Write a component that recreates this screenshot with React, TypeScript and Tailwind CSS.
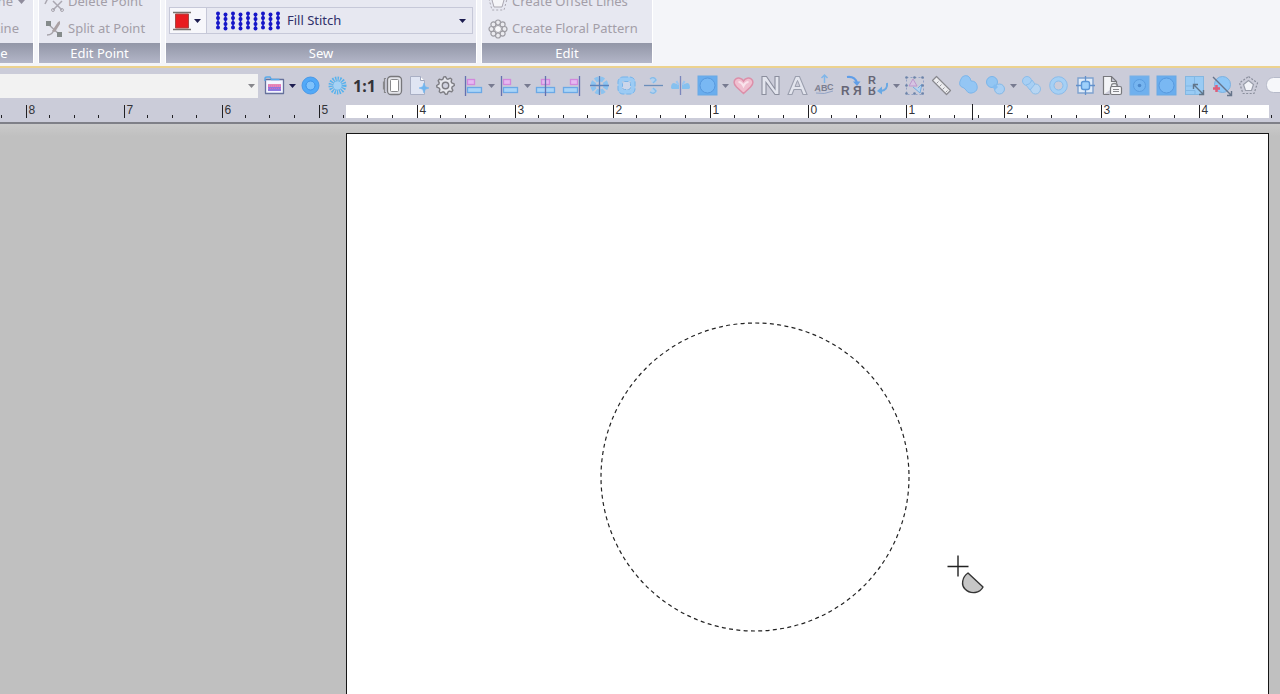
import React from "react";

type IconProps = { children: React.ReactNode; size?: number };

function Icon({ children, size = 27 }: IconProps) {
  return (
    <svg width={size} height={size} viewBox={`0 0 ${size} ${size}`} fill="none" aria-hidden="true" className="block shrink-0">
      {children}
    </svg>
  );
}

function Caret({ color = "#1c1c50" }: { color?: string }) {
  return (
    <svg width="9" height="6" viewBox="0 0 9 6" aria-hidden="true" className="block shrink-0">
      <path d="M1 1h7L4.500 5z" fill={color} />
    </svg>
  );
}

const blue = "#7db6ea";
const pale = "#9cc6f0";
const navy = "#6470b0";

const points = (n: number, r: number, cx = 13.5, cy = 13.5) =>
  Array.from({ length: n }, (_, i) => {
    const a = (i / n) * Math.PI * 2 - Math.PI / 2;
    return [cx + Math.cos(a) * r, cy + Math.sin(a) * r] as const;
  });

const gear =
  points(32, 1, 0, 0)
    .map(([x, y], i) => {
      const r = i % 4 === 1 || i % 4 === 2 ? 6.8 : 8.8;
      return `${i ? "L" : "M"}${13.5 + x * r} ${13.5 + y * r}`;
    })
    .join("") + "Z";

const icons = {
  folder: (
    <>
      <path d="M4.500 7.500h18v14h-18z" fill="#f3f5ff" stroke="#66719c" strokeWidth="1.300" strokeLinejoin="round" />
      <path d="M4 9V6.500q0-1.500 2-1.500h3l1.500 2.500h8" stroke="#58a9ea" strokeWidth="1.400" />
      <path d="M7 12h13v4H7z" fill="#e888b5" />
      <path d="M7 15h13v4H7z" fill="#8d78e0" />
      <path d="M7 14h13M7 16.500h13" stroke="#d46bc0" strokeDasharray="1 1" />
    </>
  ),
  disc: (
    <>
      <circle cx="13.500" cy="13.500" r="8.500" fill="#51a9f8" stroke="#4a98e6" />
      <circle cx="13.500" cy="13.500" r="4.500" fill="#7fc2fb" stroke="#3c92ea" />
    </>
  ),
  burst: (
    <>
      <circle cx="13.500" cy="13.500" r="6.500" stroke="#57b2ee" strokeWidth="5" strokeDasharray="1.300 1" />
      <circle cx="13.500" cy="13.500" r="4.500" stroke="#6ab9f0" strokeWidth="1" />
      <circle cx="13.500" cy="13.500" r="4" fill="#a5d2f5" />
    </>
  ),
  hoop: (
    <>
      <path d="M8 6.500H6.500V20.500H8M5.500 9.500v8" stroke="#88888c" strokeWidth="1.200" />
      <rect x="9.500" y="4.500" width="14" height="18" rx="3.500" fill="#e4e5ea" stroke="#77777b" strokeWidth="1.300" />
      <rect x="12.500" y="7.500" width="8" height="12" rx="1" fill="#fff" stroke="#88888b" />
    </>
  ),
  newPage: (
    <>
      <path d="M5.500 4.500h10l4 4v14h-14z" fill="#e0e5f3" stroke="#a9afc4" />
      <path d="M15.500 4.500v4h4" fill="#fff" stroke="#a0a7bd" />
      <path d="M19 11l1.300 3.700 3.700 1.300-3.700 1.300L19 21l-1.300-3.700-3.700-1.300 3.700-1.300z" fill="#71b5ef" stroke="#71b5ef" strokeWidth=".6" />
    </>
  ),
  gear: (
    <>
      <path d={gear} fill="#e6e7ed" stroke="#7d7d83" strokeWidth="1.400" strokeLinejoin="round" />
      <circle cx="13.500" cy="13.500" r="3.200" fill="#d0d2df" stroke="#7d7d83" strokeWidth="1.400" />
    </>
  ),
  alignLeft: (
    <>
      <rect x="7.500" y="7.500" width="7" height="5" fill="#e6b8f2" stroke="#d288dd" strokeWidth="1.300" />
      <rect x="7.500" y="15.500" width="14" height="5" fill="#a9d4f7" stroke="#6ba9e6" strokeWidth="1.300" />
      <path d="M5.500 4v20" stroke={navy} strokeWidth="1.300" />
    </>
  ),
  alignCenter: (
    <>
      <rect x="9.500" y="7.500" width="8" height="5" fill="#e6b8f2" stroke="#d288dd" strokeWidth="1.300" />
      <rect x="4.500" y="15.500" width="18" height="5" fill="#a9d4f7" stroke="#6ba9e6" strokeWidth="1.300" />
      <path d="M13.500 4v20" stroke={navy} strokeWidth="1.300" />
    </>
  ),
  alignRight: (
    <>
      <rect x="11.500" y="7.500" width="7" height="5" fill="#e6b8f2" stroke="#d288dd" strokeWidth="1.300" />
      <rect x="4.500" y="15.500" width="14" height="5" fill="#a9d4f7" stroke="#6ba9e6" strokeWidth="1.300" />
      <path d="M20.500 4v20" stroke={navy} strokeWidth="1.300" />
    </>
  ),
  centerBoth: (
    <>
      <circle cx="13.500" cy="13.500" r="6.500" stroke="#8cc3f0" strokeWidth="5" strokeDasharray="3.500 1.600" />
      <path d="M13.500 4v19M4 13.500h19" stroke="#5a83bd" strokeWidth="1.300" />
    </>
  ),
  ring: (
    <>
      <rect x="7" y="7" width="13" height="13" rx="3" stroke="#9ccbf4" strokeWidth="4.500" />
      <rect x="5" y="5" width="17" height="17" rx="5" stroke="#79b4e9" strokeWidth="1" strokeDasharray="5 2" />
      <rect x="9.500" y="9.500" width="8" height="8" rx="2" stroke="#79b4e9" fill="#ccd6ea" strokeDasharray="4 1.300" />
    </>
  ),
  centerH: (
    <>
      <path d="M10 6q4-2 7 1l-1 4h-4zM10 21q4 2 7-1l-1-4h-4z" fill="#b2d1ef" />
      <path d="M10 7q4-3 6 1l-3 3M10 20q4 3 6-1l-3-3" stroke="#86bce9" strokeWidth="1.300" />
      <path d="M4 13.500h19" stroke="#6b8ebb" strokeWidth="1.300" />
    </>
  ),
  centerV: (
    <>
      <path d="M4 16q0-5 3-5l5 2v4H5zM23 16q0-5-3-5l-5 2v4h7z" fill="#86c1ef" />
      <path d="M9.500 9l2 4M17.500 9l-2 4" stroke={pale} strokeWidth="2" />
      <path d="M13.500 4v19" stroke="#7b86bc" strokeWidth="1.300" />
    </>
  ),
  roundSquare: (
    <>
      <rect x="4" y="4" width="19" height="19" fill="#69adee" stroke="#6ba9e5" />
      <circle cx="13.500" cy="13.500" r="7.500" fill="#79b8f3" stroke="#5798dd" />
    </>
  ),
  heart: (
    <>
      <path d="M13.500 21.500L6.500 15C-.5 8 9.500 2.500 13.500 9C17.500 2.500 27.500 8 20.500 15Z" fill="#f0bfd0" stroke="#dc8fa9" strokeWidth="1.500" />
      <path d="M8.500 10q3 0 5 4q2-4 5-4" stroke="#f9e4ec" strokeWidth="2" />
    </>
  ),
  outlineN: <path d="M5 22.500v-18h4.500l8.500 12.500v-12.500h4v18h-4L9 10.500v12z" fill="#e3e5ee" stroke="#8b8e9d" strokeWidth="1.100" />,
  outlineA: (
    <>
      <path d="M4 22.500l7.500-18h4l7.500 18h-4l-2-5H10l-2 5z" fill="#e3e5ee" stroke="#9b9fae" strokeWidth="1.100" />
      <path d="M13.500 8.500l-2.500 6h5z" fill="#cbccd9" stroke="#9b9fae" />
    </>
  ),
  textCurve: (
    <>
      <path d="M13.500 3v8M10.500 6l3-3 3 3" stroke="#80b6e9" strokeWidth="1.500" />
      <text x="3" y="19" fontSize="9" fontFamily="Liberation Sans" fontWeight="700" fill="#7b7e90" transform="rotate(8 4 20)">A</text>
      <text x="10" y="19" fontSize="9" fontFamily="Liberation Sans" fontWeight="700" fill="#7b7e90">B</text>
      <text x="16" y="18" fontSize="9" fontFamily="Liberation Sans" fontWeight="700" fill="#7b7e90">C</text>
      <path d="M5 21q8 2 17-2" stroke="#93a4c6" />
    </>
  ),
  mirrorH: (
    <>
      <text x="3" y="23" fontSize="12" fontFamily="Liberation Sans" fontWeight="700" fill="#656575">R</text>
      <text x="15" y="23" fontSize="12" fontFamily="Liberation Sans" fontWeight="700" fill="#656575">Я</text>
      <path d="M9 5q8-1 10 6" stroke="#609ee8" strokeWidth="2" />
      <path d="M15 9.500h7.500L19 14z" fill="#609ee8" />
    </>
  ),
  mirrorV: (
    <>
      <text x="3" y="12" fontSize="11" fontFamily="Liberation Sans" fontWeight="700" fill="#656575">R</text>
      <g transform="translate(0 27) scale(1 -1)">
        <text x="3" y="12" fontSize="11" fontFamily="Liberation Sans" fontWeight="700" fill="#656575">R</text>
      </g>
      <path d="M22 11q1 7-6 8" stroke="#6aa9e4" strokeWidth="2" />
      <path d="M17 14.500v8L12 19z" fill="#6aa9e4" />
    </>
  ),
  selectPoints: (
    <>
      <path d="M5.500 5.500h17v17h-17z" stroke="#93a2c6" strokeDasharray="2 2" />
      <path d="M8 14l4-7 4 7z" fill="#d6c4e2" stroke="#be97cd" />
      <path d="M12 15l7 6 2-9-4 4" fill="#b5d4f0" stroke="#76acdf" />
      {[5, 13, 21].flatMap((x) =>
        [5, 13, 21].map((y) =>
          x === 13 && y === 13 ? null : <circle key={`${x}-${y}`} cx={x + 0.5} cy={y + 0.5} r="1.300" fill="#6b83a8" />
        )
      )}
    </>
  ),
  ruler: (
    <>
      <path d="M4.500 8.500l4-4L22.500 18.500l-4 4z" fill="#ededf0" stroke="#88888e" strokeWidth="1.200" strokeLinejoin="round" />
      <path d="M8.500 11.500l2-2M11.500 14.500l2-2M14.500 17.500l2-2M17.500 20.500l2-2" stroke="#99999f" />
    </>
  ),
  merge: <path d="M6 7a5 5 0 0 1 9-1l1 3a6 6 0 1 1-5 9l-2-2q-7-2-3-9z" fill="#94c6f4" stroke="#7cb6eb" />,
  overlap: (
    <>
      <circle cx="10" cy="10" r="5.500" fill="#93c6f3" stroke="#7ab5ea" />
      <circle cx="17.500" cy="17" r="5" fill="#aad0f4" stroke="#84b9e8" />
      <path d="M10 15l3-3 3 3-3 3z" fill="#84bdf1" />
    </>
  ),
  overlapPale: (
    <>
      <circle cx="9" cy="9" r="4.500" fill="#a7cff4" stroke="#8bbdea" />
      <circle cx="17.500" cy="17" r="5" fill="#b7d5f2" stroke="#8dbee8" />
      <path d="M8 13q4 0 6-5l3 4-5 6z" fill="#a7cff4" stroke="#8bbdea" />
    </>
  ),
  donut: (
    <>
      <circle cx="13.500" cy="13.500" r="6.500" stroke="#a5d0f5" strokeWidth="4" />
      <circle cx="13.500" cy="13.500" r="8.800" stroke="#86bced" />
      <circle cx="13.500" cy="13.500" r="4.500" stroke="#86bced" />
    </>
  ),
  target: (
    <>
      <path d="M6 6h15v15H6z" fill="#dfebf8" stroke="#7fa2cf" strokeWidth="1.400" />
      <path d="M13.500 4v19M4 13.500h19" stroke="#6290cb" strokeWidth="1.300" />
      <rect x="9.500" y="9.500" width="8" height="8" rx="2" fill="#9ed0fb" stroke="#5c97d8" strokeWidth="1.400" />
    </>
  ),
  pageLock: (
    <>
      <path d="M4.500 22.500v-18h8l5 5v4M12.500 4.500v5h5M4.500 22.500h6" fill="#f3f4f7" stroke="#77787d" strokeWidth="1.200" />
      <path d="M12.500 15v-1.500q0-2 3-2t3 2V15" stroke="#88898e" strokeWidth="1.300" />
      <rect x="11.500" y="14.500" width="11" height="8" rx="1.500" fill="#f5f5f8" stroke="#77787d" strokeWidth="1.200" />
      <path d="M14 17.500h6M14 19.500h6" stroke="#88898e" />
    </>
  ),
  squareDot: (
    <>
      <rect x="4" y="4" width="19" height="19" fill="#6fb0ee" stroke="#79b0e5" />
      <circle cx="13.500" cy="13.500" r="6" fill="#76b5f0" stroke="#5c9ddf" />
      <circle cx="13.500" cy="13.500" r="1.800" fill="#4c88cb" />
    </>
  ),
  scale: (
    <>
      <rect x="4.500" y="4.500" width="18" height="18" fill="#99cbf4" stroke="#84b7e1" />
      <path d="M13.500 5v9H5M5 18.500h9v4" stroke="#83b7e3" />
      <path d="M13 13l9 9M12.500 17v-4.500H17M22.500 18v4.500H18" stroke="#617589" strokeWidth="1.400" />
    </>
  ),
  noAdd: (
    <>
      <circle cx="14.500" cy="12.500" r="8" fill="#8fc7f6" stroke="#7cb1e0" />
      <path d="M5 5l18 18M23.500 19v4.500H19" stroke="#66748a" strokeWidth="1.400" />
      <path d="M8.500 13v7M5 16.500h7" stroke="#df5e79" strokeWidth="2.500" />
    </>
  ),
  pentagon: (
    <>
      <path d="M13.500 4.500l9 6.500-3.500 10.500h-11L4.500 11z" stroke="#8a8e9c" strokeWidth="1.200" strokeDasharray="2 1.500" />
      <path d="M13.500 8.500l5 4-2 6h-6l-2-6z" fill="#f3f4f9" stroke="#999daa" strokeWidth="1.200" />
    </>
  ),
  pill: <rect x="4.500" y="5.500" width="24" height="15" rx="7" fill="#f6f7fa" stroke="#b6bac9" />,
};

type Tool = { name: string; icon?: keyof typeof icons; text?: string; drop?: boolean; caret?: string; space?: boolean };

const tools: Tool[] = [
  { name: "Open design", icon: "folder", drop: true },
  { name: "Solid view", icon: "disc" },
  { name: "Stitch view", icon: "burst" },
  { name: "Actual size", text: "1:1" },
  { name: "Hoop", icon: "hoop" },
  { name: "New page", icon: "newPage" },
  { name: "Settings", icon: "gear" },
  { name: "Align edges", icon: "alignLeft", drop: true, caret: "#777a90", space: true },
  { name: "Align left", icon: "alignLeft", drop: true, caret: "#777a90" },
  { name: "Align center", icon: "alignCenter" },
  { name: "Align right", icon: "alignRight" },
  { name: "Center in hoop", icon: "centerBoth" },
  { name: "Distribute", icon: "ring" },
  { name: "Center horizontally", icon: "centerH" },
  { name: "Center vertically", icon: "centerV" },
  { name: "Shape", icon: "roundSquare", drop: true, caret: "#777a90" },
  { name: "Heart", icon: "heart" },
  { name: "Outline text", icon: "outlineN" },
  { name: "Letter", icon: "outlineA" },
  { name: "Text on path", icon: "textCurve" },
  { name: "Mirror horizontally", icon: "mirrorH" },
  { name: "Mirror vertically", icon: "mirrorV", drop: true, caret: "#777a90" },
  { name: "Select points", icon: "selectPoints" },
  { name: "Measure", icon: "ruler" },
  { name: "Merge", icon: "merge" },
  { name: "Trim", icon: "overlap", drop: true, caret: "#777a90" },
  { name: "Divide", icon: "overlapPale" },
  { name: "Offset", icon: "donut" },
  { name: "Center origin", icon: "target" },
  { name: "Lock page", icon: "pageLock" },
  { name: "Square dot", icon: "squareDot" },
  { name: "Round square", icon: "roundSquare" },
  { name: "Scale", icon: "scale", space: true },
  { name: "Remove", icon: "noAdd" },
  { name: "Pentagon", icon: "pentagon" },
  { name: "Pill", icon: "pill" },
];

function ToolButton({ tool }: { tool: Tool }) {
  return (
    <button
      type="button"
      aria-label={tool.name}
      className={`flex h-7 shrink-0 items-center ${tool.drop ? "w-9" : "w-[27px]"} ${tool.space ? "ml-px" : ""}`}
    >
      {tool.icon ? (
        <Icon>{icons[tool.icon]}</Icon>
      ) : (
        <span className="w-full text-center font-['Noto_Sans',sans-serif] text-base font-bold text-[#333338]">{tool.text}</span>
      )}
      {tool.drop && <Caret color={tool.caret} />}
    </button>
  );
}

function Group({ title, width, children }: { title: string; width: string; children: React.ReactNode }) {
  return (
    <section className={`flex h-full shrink-0 flex-col justify-end border-x border-white bg-[#e7e8f1] ${width}`}>
      {children}
      <h2 className="h-5 shrink-0 bg-linear-to-b from-[#9296a7] to-[#b3b6c8] text-center text-[13px] leading-5 text-white">{title}</h2>
    </section>
  );
}

function RibbonCommand({ label, icon }: { label: string; icon?: React.ReactNode }) {
  return (
    <button type="button" className="flex h-[27px] shrink-0 items-center gap-1 whitespace-nowrap text-[#a39ea8]">
      {icon}
      {label}
    </button>
  );
}

function Ribbon() {
  return (
    <header className="flex h-[63px] items-end gap-1 overflow-hidden bg-[#f4f5f9] text-[13px]">
      <Group title="Outline" width="w-[98px] -ml-[64px]">
        <div className="flex flex-col items-end pb-px">
          <div className="flex items-center gap-1 pr-[7px]">
            <RibbonCommand label="Line" />
            <Caret color="#8f8c9c" />
          </div>
          <div className="pr-[14px]">
            <RibbonCommand label="Line" />
          </div>
        </div>
      </Group>
      <Group title="Edit Point" width="w-[123px]">
        <div className="flex flex-col items-start pb-px pl-[5px]">
          <RibbonCommand
            label="Delete Point"
            icon={
              <Icon size={20}>
                <path d="M1 12l3-6M9 9l9 9M18 9l-9 9" stroke="#aaa7b1" strokeWidth="1.500" />
                <circle cx="9" cy="18" r="1.500" stroke="#aaa7b1" />
                <circle cx="18" cy="18" r="1.500" stroke="#aaa7b1" />
              </Icon>
            }
          />
          <RibbonCommand
            label="Split at Point"
            icon={
              <Icon size={20}>
                <path d="M3 4l13 12M3 16q6 0 7-6" stroke="#a6a3aa" strokeWidth="1.400" />
                <path d="M8 12l6-9 2-1v3l-5 8z" fill="#aaa1a4" />
                <path d="M2 2h5v5H2zM13 13h5v5h-5z" fill="#858b8b" />
              </Icon>
            }
          />
        </div>
      </Group>
      <Group title="Sew" width="w-[312px]">
        <div className="mx-[3px] mb-[9px] flex h-[27px] border border-[#c6c8d8] text-[#30306a]">
          <button type="button" aria-label="Thread color" className="flex w-[37px] items-center border-r border-[#c6c8d8] bg-[#f7f7fb]">
            <Icon size={23}>
              <path d="M3 3.500h18M3 20.500h18" stroke="#77736f" strokeWidth="1.500" />
              <path d="M5.500 5h13v14h-13z" fill="#e81c20" stroke="#a94743" />
            </Icon>
            <Caret />
          </button>
          <label className="flex min-w-0 flex-1 items-center pr-[5px] pl-2">
            <svg width="68" height="20" viewBox="0 0 68 20" aria-hidden="true" className="mr-1 shrink-0">
              {Array.from({ length: 9 }, (_, i) => {
                const x = 3 + i * 7.5;
                const y = i % 2 ? 1 : 0;
                return (
                  <g key={i} fill="#1616c8" stroke="#1616c8">
                    <path d={`M${x} 2v15`} strokeWidth="1.500" />
                    {[2.5, 7, 12, 16.5].map((c) => (
                      <circle key={c} cx={x} cy={c + y} r="2" stroke="none" />
                    ))}
                  </g>
                );
              })}
            </svg>
            <select aria-label="Stitch type" className="min-w-0 flex-1 appearance-none bg-transparent">
              <option>Fill Stitch</option>
            </select>
            <Caret />
          </label>
        </div>
      </Group>
      <Group title="Edit" width="w-[172px]">
        <div className="flex flex-col items-start pb-px pl-[6px]">
          <RibbonCommand
            label="Create Offset Lines"
            icon={
              <Icon size={20}>
                <path d="M10 4l6 4-2 7H6L4 8z" fill="#f5f5f8" stroke="#aaa7b1" />
                <path d="M10 1l9 6-3 11H4L1 7z" stroke="#aaa7b1" strokeDasharray="2 2" />
              </Icon>
            }
          />
          <RibbonCommand
            label="Create Floral Pattern"
            icon={
              <Icon size={20}>
                {points(8, 6.5, 10, 10).map(([x, y], i) => (
                  <circle key={i} cx={x} cy={y} r="2.500" fill="#ebebf0" stroke="#9d9ca3" strokeWidth="1.200" />
                ))}
                <circle cx="10" cy="10" r="3.500" fill="#f8f8fb" stroke="#9d9ca3" />
              </Icon>
            }
          />
        </div>
      </Group>
    </header>
  );
}

function Ruler() {
  const step = 97.75;
  const zero = 808.5;
  const majors = Array.from({ length: 15 }, (_, i) => i - 9);
  return (
    <div className="flex h-[18px] overflow-hidden bg-[#cbccd9]">
      <svg width="100%" height="18" fontFamily="Liberation Sans, sans-serif" fontSize="12" className="block min-w-[1280px]">
        <rect x="346" y="1" width="923" height="13" fill="#fff" />
        {majors.map((n) => {
          const x = Math.floor(zero + n * step) + 0.5;
          return (
            <g key={n} stroke="#202024">
              <path d={`M${x} 1v13`} />
              {[1, 2, 3].map((q) => {
                const qx = Math.floor(zero + (n + q / 4) * step - 1) + 0.5;
                return <path key={q} d={`M${qx} 11v3`} />;
              })}
              <text x={x + 2} y="10" stroke="none" fill="#333338">{Math.abs(n)}</text>
            </g>
          );
        })}
        <path d="M972.500 -1v17" stroke="#202024" />
      </svg>
    </div>
  );
}

export default function App() {
  return (
    <div className="flex min-h-screen flex-col overflow-hidden bg-[#c0c0c0] font-['Noto_Sans',sans-serif]">
      <Ribbon />
      <div className="h-[3px] bg-[#f4f5f9]" />
      <div className="flex h-[38px] items-center overflow-hidden border-t-2 border-b border-t-[#ecd28f] border-b-[#cbccd9] bg-[#cbccd9]">
        <label className="flex h-6 w-[258px] shrink-0 items-center bg-[#f2f2f2] pr-[2px]">
          <select aria-label="Design name" className="min-w-0 flex-1 appearance-none bg-transparent">
            <option></option>
          </select>
          <Caret color="#87878c" />
        </label>
        <nav aria-label="Tools" className="ml-[3px] flex">
          {tools.map((tool) => (
            <ToolButton key={tool.name} tool={tool} />
          ))}
        </nav>
      </div>
      <Ruler />
      <main className="flex flex-1 flex-col border-t-2 border-[#7f8088] bg-linear-to-b from-[#cacaca] to-[#c0c0c0] to-[12px] pt-[9px]">
        <div className="mr-[11px] ml-[346px] flex-1 border border-b-0 border-[#161616] bg-white">
          <svg width="100%" height="559" className="block" role="img" aria-label="Circle outline">
            <circle cx="408" cy="343" r="154" fill="none" stroke="#222" strokeWidth="1.200" strokeDasharray="4 3.330" />
            <path d="M611 421.500v21M600.500 432.500h21" stroke="#222" strokeWidth="1.400" />
            <path d="M621 439C615 443 614 451 618 455C624 461 633 459 636 453Z" fill="#c6c6c6" stroke="#333" strokeWidth="1.400" strokeLinejoin="round" />
          </svg>
        </div>
      </main>
    </div>
  );
}
